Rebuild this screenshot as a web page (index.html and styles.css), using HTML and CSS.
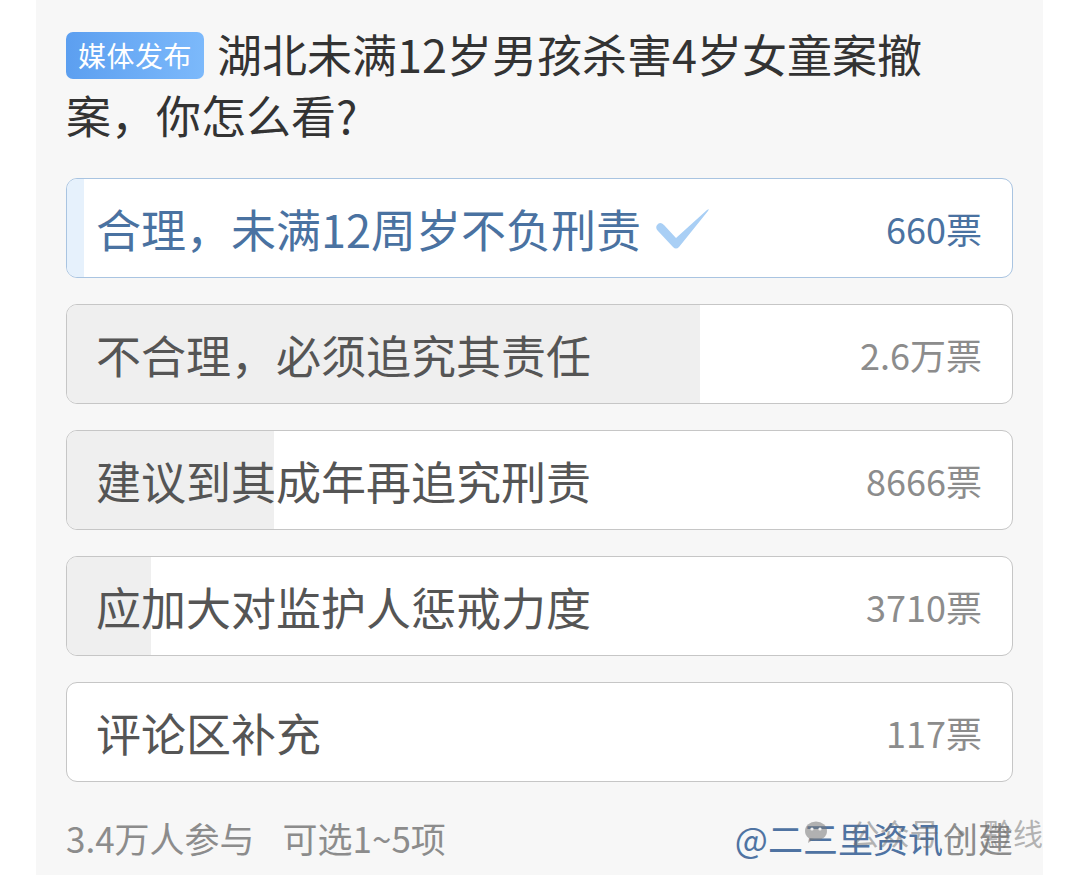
FILE: index.html
```html
<!DOCTYPE html>
<html lang="zh-CN">
<head>
<meta charset="utf-8">
<title>投票</title>
<link rel="stylesheet" href="styles.css">
</head>
<body>
<div class="panel">
  <h1 class="title"><span class="tag">媒体发布</span>湖北未满12岁男孩杀害4岁女童案撤案，你怎么看?</h1>
  <ul class="options">
    <li class="option selected">
      <div class="fill" style="width:1.8%"></div>
      <span class="label">合理，未满12周岁不负刑责<svg class="check" viewBox="0 0 56 46" width="56" height="46"><path d="M3 20 Q1 23 4 26 L19 42 Q22 45 25 42 L54 6 Q56 3 53 5 L22 33 L10 20 Q6 16 3 20 Z"/></svg></span>
      <span class="count">660票</span>
    </li>
    <li class="option">
      <div class="fill" style="width:67%"></div>
      <span class="label">不合理，必须追究其责任</span>
      <span class="count">2.6万票</span>
    </li>
    <li class="option">
      <div class="fill" style="width:21.9%"></div>
      <span class="label">建议到其成年再追究刑责</span>
      <span class="count">8666票</span>
    </li>
    <li class="option">
      <div class="fill" style="width:8.9%"></div>
      <span class="label">应加大对监护人惩戒力度</span>
      <span class="count">3710票</span>
    </li>
    <li class="option">
      <div class="fill" style="width:0%"></div>
      <span class="label">评论区补充</span>
      <span class="count">117票</span>
    </li>
  </ul>
  <div class="footer">
    <div class="meta"><span>3.4万人参与</span><span>可选1~5项</span></div>
    <div class="creator"><span class="author">@二三里资讯</span>创建</div>
    <div class="watermark">
      <svg class="wx" viewBox="0 0 28 24" width="28" height="24"><ellipse cx="12" cy="11" rx="11" ry="9.5"/><path d="M5 18 L4 23 L10 19 Z"/><circle cx="8" cy="9" r="1.6" fill="#f2f2f2"/><circle cx="16" cy="9" r="1.6" fill="#f2f2f2"/></svg>
      <span>公众号 · 黔线</span>
    </div>
  </div>
</div>
</body>
</html>
```
FILE: styles.css
```css
html, body {
  margin: 0;
  padding: 0;
  background: #ffffff;
}
body {
  font-family: "Noto Sans CJK SC", "Noto Sans", sans-serif;
}
.panel {
  margin-left: 36px;
  width: 1007px;
  height: 875px;
  box-sizing: border-box;
  background: #f7f7f7;
  padding: 31px 30px 0 30px;
}
.title {
  margin: 0;
  max-width: 910px;
  font-size: 45px;
  font-weight: 400;
  line-height: 61px;
  color: #333333;
  margin-top: -8px;
}
.tag {
  display: inline-block;
  vertical-align: top;
  margin-top: 9px;
  height: 47px;
  line-height: 47px;
  padding: 0 12px;
  margin-right: 13px;
  border-radius: 7px;
  background: linear-gradient(90deg, #5c9ff0, #7cb9fb);
  color: #ffffff;
  font-size: 28px;
  letter-spacing: 0.5px;
}
.options {
  list-style: none;
  margin: 33px 0 0 0;
  padding: 0;
  display: flex;
  flex-direction: column;
  gap: 26px;
}
.option {
  position: relative;
  height: 100px;
  box-sizing: border-box;
  border: 1.5px solid #c6c6c6;
  border-radius: 11px;
  background: #ffffff;
  display: flex;
  align-items: center;
  justify-content: space-between;
  padding: 0 30px 0 29px;
  overflow: hidden;
}
.option .fill {
  position: absolute;
  left: 0;
  top: 0;
  bottom: 0;
  background: #efefef;
}
.option .label {
  position: relative;
  font-size: 45px;
  color: #555555;
  display: flex;
  align-items: center;
}
.option .count {
  position: relative;
  font-size: 36px;
  color: #8c8c8c;
}
.option.selected {
  border-color: #a9c4e1;
}
.option.selected .fill {
  background: #e6f1fc;
}
.option.selected .label,
.option.selected .count {
  color: #4a72a1;
}
.check {
  margin-left: 13px;
  fill: #a9cff5;
}
.footer {
  position: relative;
  margin-top: 34px;
  display: flex;
  justify-content: space-between;
  align-items: center;
  font-size: 35px;
  line-height: 44px;
  color: #8c8c8c;
}
.meta {
  display: flex;
  gap: 28px;
}
.creator {
  color: #8c8c8c;
}
.author {
  color: #4f73a2;
}
.watermark {
  position: absolute;
  right: -30px;
  top: -6px;
  display: flex;
  align-items: center;
  gap: 18px;
  font-size: 30px;
  color: rgba(110, 110, 110, 0.5);
}
.wx {
  fill: rgba(120, 120, 120, 0.55);
}
```
